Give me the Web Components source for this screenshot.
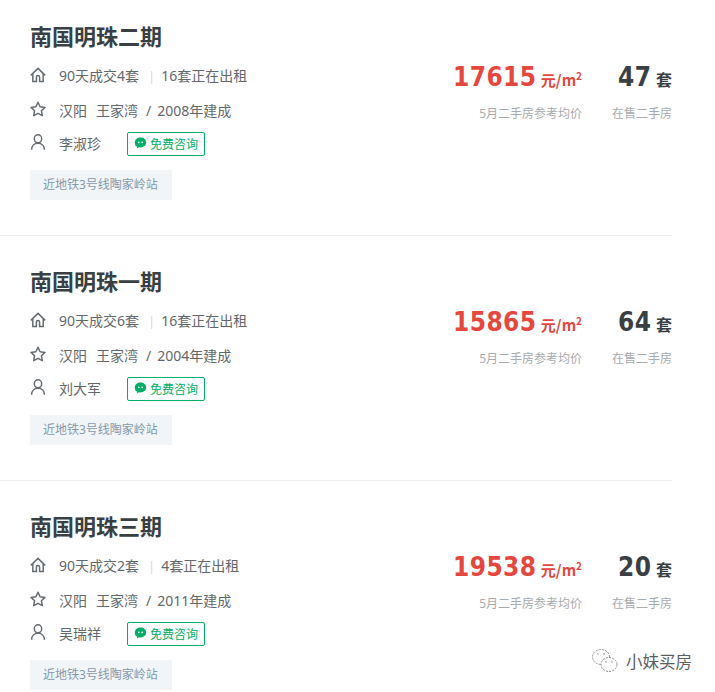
<!DOCTYPE html>
<html lang="zh">
<head>
<meta charset="utf-8">
<title>小区列表</title>
<style>
  html, body { margin: 0; background: #fff; height: 692px; overflow: hidden; }
  body { font-family: "Noto Sans", "Noto Sans CJK SC", sans-serif; position: relative; }
</style>
</head>
<body>
<estate-list>
  <estate-card name="南国明珠二期" sold="90天成交4套" rent="16套正在出租" year="2008" agent="李淑珍" price="17615" stock="47"></estate-card>
  <estate-card name="南国明珠一期" sold="90天成交6套" rent="16套正在出租" year="2004" agent="刘大军" price="15865" stock="64"></estate-card>
  <estate-card name="南国明珠三期" sold="90天成交2套" rent="4套正在出租" year="2011" agent="吴瑞祥" price="19538" stock="20"></estate-card>
</estate-list>
<wx-mark>小妹买房</wx-mark>

<script>
const ICONS = {
  home: `<svg viewBox="0 0 16 16" fill="none" stroke="#666d73" stroke-width="1.5"><path d="M.8 8.400 8 1.400l7.200 7"/><path d="M2.800 6.800V14.500h3.600v-4.300a1.600 1.600 0 0 1 3.200 0v4.300h3.600V6.800"/></svg>`,
  star: `<svg viewBox="0 0 16 16" fill="none" stroke="#666d73" stroke-width="1.5" stroke-linejoin="round"><path d="M8 1.300l2.100 4.500 4.900.6-3.600 3.300.9 4.900L8 12.300l-4.300 2.300.9-4.900L1 6.400l4.900-.6z"/></svg>`,
  user: `<svg viewBox="0 0 16 16" fill="none" stroke="#666d73" stroke-width="1.5"><ellipse cx="8" cy="4.800" rx="3.700" ry="4"/><path d="M1.600 15.800c0-3.900 2.700-6.600 6.400-6.600s6.400 2.700 6.400 6.600"/></svg>`,
  chat: `<svg viewBox="0 0 13 13"><path fill="#00ae66" d="M6.500.6c3.100 0 5.700 2.100 5.700 4.900s-2.600 4.900-5.700 4.900c-.6 0-1.100-.1-1.600-.2l-2 1.300.3-2C1.600 9.500.8 7.600.8 5.500.8 2.700 3.400.6 6.500.6z"/><circle cx="4.800" cy="5.300" r=".9" fill="#fff"/><circle cx="8.200" cy="5.300" r=".9" fill="#fff"/></svg>`
};

class EstateList extends HTMLElement {
  constructor() {
    super();
    this.attachShadow({ mode: "open" }).innerHTML = `
      <style>
        :host { display: flex; flex-direction: column; width: 672px; margin-top: -9px; }
      </style>
      <slot></slot>`;
  }
}

class EstateCard extends HTMLElement {
  constructor() {
    super();
    this.shadow = this.attachShadow({ mode: "open" });
  }

  connectedCallback() {
    const a = name => this.getAttribute(name);
    this.shadow.innerHTML = `
      <style>
        :host {
          display: flex;
          justify-content: space-between;
          box-sizing: border-box;
          height: 245px;
          padding: 27px 0 0 30px;
          border-bottom: 1px solid #eeeeee;
          color: #63686c;
          font-size: 14px;
          font-family: "Noto Sans", "Noto Sans CJK SC", sans-serif;
        }
        .info { display: flex; flex-direction: column; }
        h2 {
          margin: 0;
          height: 34px;
          line-height: 34px;
          font-size: 22px;
          font-weight: 700;
          color: #394043;
          font-family: "Noto Sans CJK SC", sans-serif;
        }
        .row { display: flex; align-items: center; height: 20px; line-height: 20px; white-space: pre; }
        .row svg { flex: none; width: 16px; height: 16px; margin-right: 13px; }
        .r1 { margin-top: 14px; }
        .r1 svg { margin-top: -2px; }
        .r2 { margin-top: 15px; }
        .r2 svg { margin-top: -4px; }
        .r3 { margin-top: 11px; height: 24px; }
        .r3 svg { margin-top: -4px; }
        .sep { color: #d6d9dc; margin: 0 6px 0 9px; font-size: 13px; }
        .gap1 { margin-right: 9px; }
        .gap2 { margin-right: 8px; }
        .gap3 { margin-right: 6px; }
        .agent { width: 68px; }
        .chat {
          display: flex;
          align-items: center;
          box-sizing: border-box;
          width: 78px;
          height: 24px;
          padding: 2px 0 0 6px;
          border: 1px solid #00ae66;
          border-radius: 2px;
          color: #00ae66;
          font-size: 12px;
        }
        .row .chat svg { width: 13px; height: 13px; margin: -4px 3px 0 0; }
        .tag {
          align-self: flex-start;
          margin-top: 14px;
          height: 30px;
          line-height: 30px;
          padding: 0 14px 0 13px;
          background: #f2f5f7;
          color: #849aae;
          font-size: 12px;
        }
        .figures { display: flex; align-items: flex-start; margin-top: 38px; text-align: right; }
        .col { display: flex; flex-direction: column; align-items: flex-end; }
        .price-col { width: 142px; }
        .stock-col { margin-left: 30px; width: 60px; }
        .big {
          margin-top: 3px;
          height: 36px;
          line-height: 36px;
          white-space: nowrap;
          font-weight: 700;
          font-size: 15px;
          font-family: "Noto Sans CJK SC", sans-serif;
        }
        .big b { font: 700 26px/36px "DejaVu Sans", sans-serif; font-stretch: condensed; letter-spacing: .4px; margin-right: 1px; }
        .price-col .big { color: #e4473d; }
        .stock-col .big { color: #394043; font-size: 16px; }
        sup { font-size: 10px; line-height: 0; vertical-align: 6px; }
        .cap { margin-top: 10px; font-size: 12px; line-height: 18px; color: #a8abad; white-space: nowrap; }
      </style>
      <div class="info">
        <h2>${a("name")}</h2>
        <div class="row r1">${ICONS.home}<span>${a("sold")}</span><span class="sep">|</span><span>${a("rent")}</span></div>
        <div class="row r2">${ICONS.star}<span class="gap1">汉阳</span><span class="gap2">王家湾</span><span class="gap3">/</span><span>${a("year")}年建成</span></div>
        <div class="row r3">${ICONS.user}<span class="agent">${a("agent")}</span><span class="chat">${ICONS.chat}免费咨询</span></div>
        <div class="tag">近地铁3号线陶家岭站</div>
      </div>
      <div class="figures">
        <div class="col price-col">
          <div class="big"><b>${a("price")}</b> 元/m<sup>2</sup></div>
          <div class="cap">5月二手房参考均价</div>
        </div>
        <div class="col stock-col">
          <div class="big"><b>${a("stock")}</b> 套</div>
          <div class="cap">在售二手房</div>
        </div>
      </div>`;
  }
}

class WxMark extends HTMLElement {
  constructor() {
    super();
    this.attachShadow({ mode: "open" }).innerHTML = `
      <style>
        :host {
          position: absolute;
          left: 591px;
          top: 648px;
          display: flex;
          align-items: center;
          gap: 8px;
          color: #5c5f61;
          font-size: 16.500px;
          line-height: 26px;
          font-family: "Noto Sans CJK SC", sans-serif;
        }
        svg { display: block; }
      </style>
      <svg width="27" height="26" viewBox="0 0 27 26" fill="#fff" stroke="#8a8a8a" stroke-width="1" stroke-dasharray="2 1.200">
        <ellipse cx="10" cy="9" rx="8.500" ry="7.500"/>
        <ellipse cx="18" cy="16.500" rx="8" ry="7"/>
        <circle cx="7" cy="6" r=".7" stroke="none" fill="#777"/>
        <circle cx="13" cy="6" r=".7" stroke="none" fill="#777"/>
        <circle cx="15" cy="14" r=".7" stroke="none" fill="#777"/>
        <circle cx="21" cy="14" r=".7" stroke="none" fill="#777"/>
      </svg>
      <slot></slot>`;
  }
}

customElements.define("estate-list", EstateList);
customElements.define("estate-card", EstateCard);
customElements.define("wx-mark", WxMark);
</script>
</body>
</html>
